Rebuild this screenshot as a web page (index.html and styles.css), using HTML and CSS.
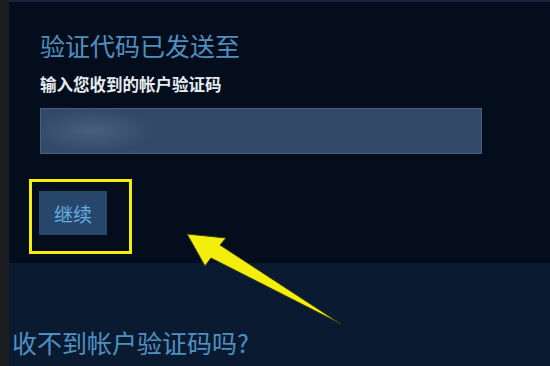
FILE: index.html
```html
<!DOCTYPE html>
<html lang="zh-CN">
<head>
	<meta charset="utf-8" />
	<title>验证代码</title>
	<link rel="stylesheet" href="styles.css">
</head>
<body>
	<div class="page">
		<div class="rail"></div>
		<div class="main">
			<section class="card">
				<h1>验证代码已发送至</h1>
				<p class="hint">输入您收到的帐户验证码</p>
				<input class="code" type="text" aria-label="验证码">
				<div class="mark">
					<button class="go">继续</button>
				</div>
			</section>
			<section class="footer">
				<a class="help" href="#">收不到帐户验证码吗?</a>
			</section>
		</div>
		<!-- annotation arrow pointing at the button -->
		<svg class="arrow" width="550" height="366" viewBox="0 0 550 366">
			<path d="M187 234 L226 238 L220 245 L341 324 L211 258 L205 266 Z" fill="#f3ee0c" stroke="#3a3a10" stroke-width="1" stroke-linejoin="round" />
		</svg>
	</div>
</body>
</html>
```

FILE: styles.css
```css
html, body { margin: 0; height: 100%; }
body {
	font-family: "Noto Sans CJK SC", "Noto Sans", sans-serif;
	background-color: #040d1b;
	overflow: hidden;
}
.page {
	position: relative;
	display: flex;
	width: 550px;
	height: 366px;
}
.rail {
	width: 9px;
	background-color: #1c1d20;
}
.main {
	flex: 1;
	display: flex;
	flex-direction: column;
	border-top: 2px solid #16223a;
}
.card {
	height: 261px;
	padding: 28px 0 0 31px;
	box-sizing: border-box;
	background-color: #040d1b;
}
h1 {
	margin: 0;
	font-size: 25px;
	line-height: 30px;
	font-weight: normal;
	color: #4f90c0;
}
.hint {
	margin: 13px 0 0;
	font-size: 16.5px;
	line-height: 22px;
	font-weight: bold;
	color: #e6ecf2;
}
.code {
	display: block;
	margin-top: 13px;
	width: 442px;
	height: 46px;
	box-sizing: border-box;
	border: 1px solid #4a5e7c;
	background-color: #32496a;
	background-image: radial-gradient(ellipse 60px 22px at 52px 50%, rgba(140,160,190,0.25), rgba(140,160,190,0) 100%);
	outline: none;
}
.mark {
	display: inline-block;
	margin: 25px 0 0 -11px;
	padding: 9px 22px 16px 7px;
	border: 3px solid #f2ee0a;
}
.go {
	display: block;
	width: 68px;
	height: 44px;
	border: 0;
	background-color: #26476a;
	color: #66ade0;
	font-family: inherit;
	font-size: 19px;
	padding: 0;
}
.footer {
	flex: 1;
	padding: 64px 0 0 3px;
	background-color: #0a1a31;
}
.help {
	font-size: 25px;
	line-height: 30px;
	color: #4f90c0;
	text-decoration: none;
}
.arrow {
	position: absolute;
	left: 0;
	top: 0;
	pointer-events: none;
}
```
